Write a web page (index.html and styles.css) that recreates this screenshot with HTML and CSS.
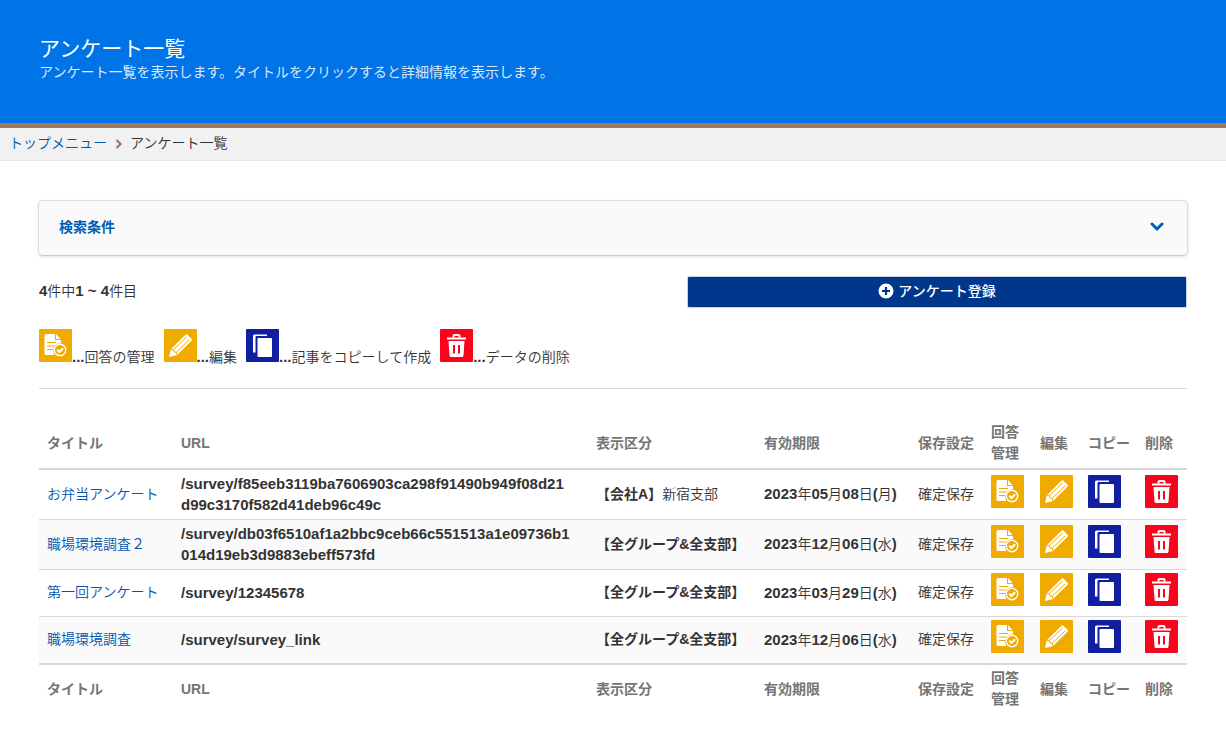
FILE: index.html
```
<!DOCTYPE html>
<html lang="ja">
<head>
<meta charset="utf-8">
<title>アンケート一覧</title>
<link rel="stylesheet" href="styles.css">
</head>
<body>
<svg class="defs" aria-hidden="true">
  <symbol id="i-answer" viewBox="0 0 33 33">
    <rect width="33" height="33" rx="1" fill="#f0ab00"/>
    <path d="M7 5h9v6h6v4.500a7 7 0 0 0-6.500 10.500H7a1.500 1.500 0 0 1-1.500-1.500v-18A1.500 1.500 0 0 1 7 5z" fill="#fff"/>
    <path d="M17 5l4.500 5H17z" fill="#fff"/>
    <path d="M8 13.500h9M8 17h7M8 20.500h6" stroke="#f0ab00" stroke-width="1.200"/>
    <circle cx="21" cy="21" r="6.800" fill="#f0ab00"/>
    <circle cx="21" cy="21" r="5.700" fill="none" stroke="#fff" stroke-width="1.400"/>
    <path d="M18.200 20.800l2.200 2.200 3.700-3.800" fill="none" stroke="#fff" stroke-width="2"/>
  </symbol>
  <symbol id="i-edit" viewBox="0 0 33 33">
    <rect width="33" height="33" rx="1" fill="#f0ab00"/>
    <path d="M5 28l1.800-7.700L21.500 5.700q1-1 2 0l4 4q1 1 0 2L12.800 26.300z" fill="#fff"/>
    <path d="M9.500 20.500L22.500 8M12.300 23.200L25.300 10.700M7 20.500l2.500.3.700 2.200 2.200.4.400 2.500" fill="none" stroke="#f0ab00" stroke-width="1"/>
  </symbol>
  <symbol id="i-copy" viewBox="0 0 33 33">
    <rect width="33" height="33" rx="1" fill="#101fa1"/>
    <path d="M7 23.500V7q0-1.500 1.500-1.500H21V7H10.500q-1 0-1 1v15.500z" fill="#fff"/>
    <rect x="11.500" y="9" width="14.500" height="19" rx="1" fill="#fff"/>
  </symbol>
  <symbol id="i-trash" viewBox="0 0 33 33">
    <rect width="33" height="33" rx="1" fill="#f7051d"/>
    <path d="M13.500 8.500V7q0-1 1-1h4q1 0 1 1v1.500" fill="none" stroke="#fff" stroke-width="2"/>
    <path d="M7 8.500h19v2H7zM8.500 12h16l-1 14.500q-.1 1.500-1.500 1.500H11q-1.400 0-1.500-1.500z" fill="#fff"/>
    <path d="M14 16v8.500M19 16v8.500" stroke="#f7051d" stroke-width="2"/>
  </symbol>
</svg>

<header class="hero">
  <h1 class="hero-title">アンケート一覧</h1>
  <p class="hero-text">アンケート一覧を表示します。タイトルをクリックすると詳細情報を表示します。</p>
</header>

<nav class="crumbs" aria-label="パンくず">
  <a href="#">トップメニュー</a>
  <svg class="crumb-arrow" viewBox="0 0 7 10"><path d="M1.500 1L5.500 5l-4 4" fill="none" stroke="#a1775b" stroke-width="2.200"/></svg>
  <span>アンケート一覧</span>
</nav>

<main class="content">
  <button class="search" type="button" aria-expanded="false">
    <span>検索条件</span>
    <svg class="search-arrow" viewBox="0 0 14 10"><path d="M2 2l5 5 5-5" fill="none" stroke="#005eb8" stroke-width="3" stroke-linecap="round"/></svg>
  </button>

  <div class="toolbar">
    <p class="count"><b>4</b>件中<b>1 ~ 4</b>件目</p>
    <button class="register" type="button">
      <svg class="register-icon" viewBox="0 0 16 16"><circle cx="8" cy="8" r="7.500" fill="#fff"/><path d="M8 4v8M4 8h8" stroke="#00368c" stroke-width="2.200"/></svg>
      アンケート登録
    </button>
  </div>

  <ul class="legend">
    <li><svg class="icon"><use href="#i-answer"/></svg><b>...</b>回答の管理</li>
    <li><svg class="icon"><use href="#i-edit"/></svg><b>...</b>編集</li>
    <li><svg class="icon"><use href="#i-copy"/></svg><b>...</b>記事をコピーして作成</li>
    <li><svg class="icon"><use href="#i-trash"/></svg><b>...</b>データの削除</li>
  </ul>

  <table class="list">
    <colgroup>
      <col class="c-title"><col><col class="c-scope"><col class="c-limit"><col class="c-save"><col class="c-act"><col class="c-act"><col class="c-copy"><col class="c-del">
    </colgroup>
    <thead>
      <tr><th>タイトル</th><th>URL</th><th>表示区分</th><th>有効期限</th><th>保存設定</th><th>回答管理</th><th>編集</th><th class="copy">コピー</th><th>削除</th></tr>
    </thead>
    <tbody>
      <tr>
        <td><a href="#">お弁当アンケート</a></td>
        <td class="url">/survey/f85eeb3119ba7606903ca298f91490b949f08d21<wbr>d99c3170f582d41deb96c49c</td>
        <td><b class="ja">【会社A】</b>新宿支部</td>
        <td><b>2023</b>年<b>05</b>月<b>08</b>日<b>(</b>月<b>)</b></td>
        <td>確定保存</td>
        <td><a href="#" aria-label="回答管理"><svg class="icon"><use href="#i-answer"/></svg></a></td>
        <td><a href="#" aria-label="編集"><svg class="icon"><use href="#i-edit"/></svg></a></td>
        <td class="copy"><a href="#" aria-label="コピー"><svg class="icon"><use href="#i-copy"/></svg></a></td>
        <td><a href="#" aria-label="削除"><svg class="icon"><use href="#i-trash"/></svg></a></td>
      </tr>
      <tr>
        <td><a href="#">職場環境調査２</a></td>
        <td class="url">/survey/db03f6510af1a2bbc9ceb66c551513a1e09736b1<wbr>014d19eb3d9883ebeff573fd</td>
        <td><b class="ja">【全グループ&amp;全支部】</b></td>
        <td><b>2023</b>年<b>12</b>月<b>06</b>日<b>(</b>水<b>)</b></td>
        <td>確定保存</td>
        <td><a href="#" aria-label="回答管理"><svg class="icon"><use href="#i-answer"/></svg></a></td>
        <td><a href="#" aria-label="編集"><svg class="icon"><use href="#i-edit"/></svg></a></td>
        <td class="copy"><a href="#" aria-label="コピー"><svg class="icon"><use href="#i-copy"/></svg></a></td>
        <td><a href="#" aria-label="削除"><svg class="icon"><use href="#i-trash"/></svg></a></td>
      </tr>
      <tr>
        <td><a href="#">第一回アンケート</a></td>
        <td class="url">/survey/12345678</td>
        <td><b class="ja">【全グループ&amp;全支部】</b></td>
        <td><b>2023</b>年<b>03</b>月<b>29</b>日<b>(</b>水<b>)</b></td>
        <td>確定保存</td>
        <td><a href="#" aria-label="回答管理"><svg class="icon"><use href="#i-answer"/></svg></a></td>
        <td><a href="#" aria-label="編集"><svg class="icon"><use href="#i-edit"/></svg></a></td>
        <td class="copy"><a href="#" aria-label="コピー"><svg class="icon"><use href="#i-copy"/></svg></a></td>
        <td><a href="#" aria-label="削除"><svg class="icon"><use href="#i-trash"/></svg></a></td>
      </tr>
      <tr>
        <td><a href="#">職場環境調査</a></td>
        <td class="url">/survey/survey_link</td>
        <td><b class="ja">【全グループ&amp;全支部】</b></td>
        <td><b>2023</b>年<b>12</b>月<b>06</b>日<b>(</b>水<b>)</b></td>
        <td>確定保存</td>
        <td><a href="#" aria-label="回答管理"><svg class="icon"><use href="#i-answer"/></svg></a></td>
        <td><a href="#" aria-label="編集"><svg class="icon"><use href="#i-edit"/></svg></a></td>
        <td class="copy"><a href="#" aria-label="コピー"><svg class="icon"><use href="#i-copy"/></svg></a></td>
        <td><a href="#" aria-label="削除"><svg class="icon"><use href="#i-trash"/></svg></a></td>
      </tr>
    </tbody>
    <tfoot>
      <tr><th>タイトル</th><th>URL</th><th>表示区分</th><th>有効期限</th><th>保存設定</th><th>回答管理</th><th>編集</th><th class="copy">コピー</th><th>削除</th></tr>
    </tfoot>
  </table>
</main>
</body>
</html>
```
FILE: styles.css
```
* { box-sizing: border-box; }
body {
  margin: 0;
  font: 350 14px/21px "Liberation Sans", "Noto Sans CJK JP", sans-serif;
  color: #333;
  background: #fff;
}
h1, p, ul { margin: 0; padding: 0; }
a { color: #0055b0; text-decoration: none; }
button { font: inherit; cursor: pointer; }
b { font-size: 15px; font-weight: 700; }
b.ja { font-size: 14px; }
.defs { display: none; }

.hero {
  padding: 35px 39px 40px;
  background: #0073e6;
  border-bottom: 5px solid #a1775b;
  color: #fff;
}
.hero-title { font-size: 21px; font-weight: 400; line-height: 27px; }
.hero-text { font-weight: 400; color: rgba(255, 255, 255, 0.85); }

.crumbs {
  display: flex;
  align-items: center;
  gap: 8px;
  padding: 5px 9px 6px;
  background: #f1f1f1;
  border-bottom: 1px solid #e6e6e6;
}
.crumb-arrow { width: 7px; height: 10px; }

.content { padding: 39px 39px 24px; }

.search {
  display: flex;
  justify-content: space-between;
  align-items: center;
  width: calc(100% + 2px);
  height: 56px;
  margin: 0 -1px;
  padding: 0 23px 2px 20px;
  background: #fafafa;
  border: 1px solid #ddd;
  border-bottom-color: #ccc;
  border-radius: 5px;
  box-shadow: 0 1px 3px rgba(0, 0, 0, 0.12);
  color: #005eb8;
  font-weight: 700;
}
.search-arrow { width: 14px; height: 10px; }

.toolbar {
  display: grid;
  grid-template-columns: 1fr 500px;
  align-items: center;
  margin-top: 20px;
}
.count { padding-bottom: 2px; }
.register {
  display: flex;
  justify-content: center;
  align-items: center;
  gap: 4px;
  height: 32px;
  padding: 0 0 2px;
  background: #00368c;
  border: 1px solid #ccd3e0;
  border-radius: 2px;
  color: #fff;
  font-weight: 500;
}
.register-icon { width: 16px; height: 16px; }

.legend {
  display: flex;
  flex-wrap: wrap;
  gap: 9px;
  margin-top: 21px;
  padding-bottom: 20px;
  border-bottom: 1px solid #dadada;
  list-style: none;
}
.icon { width: 33px; height: 33px; vertical-align: baseline; }

.list {
  width: 100%;
  margin-top: 22px;
  table-layout: fixed;
  border-collapse: collapse;
}
.c-title { width: 134px; }
.c-scope { width: 168px; }
.c-limit { width: 154px; }
.c-save { width: 73px; }
.c-act { width: 49px; }
.c-copy { width: 56px; }
.c-del { width: 50px; }
.list th, .list td { padding: 3px 8px 4px; text-align: left; vertical-align: middle; }
.list th { color: #757575; font-weight: 700; }
.list thead th { padding: 11px 8px 4px; }
.list .copy { padding-right: 0; padding-left: 7px; white-space: nowrap; }
.list tbody { border-top: 2px solid #d8d8d8; border-bottom: 2px solid #d8d8d8; }
.list tbody tr + tr { border-top: 1px solid #dadada; }
.list tbody tr:nth-child(even) { background: #fafafa; }
.list .url { font-size: 15px; font-weight: 700; }
```
